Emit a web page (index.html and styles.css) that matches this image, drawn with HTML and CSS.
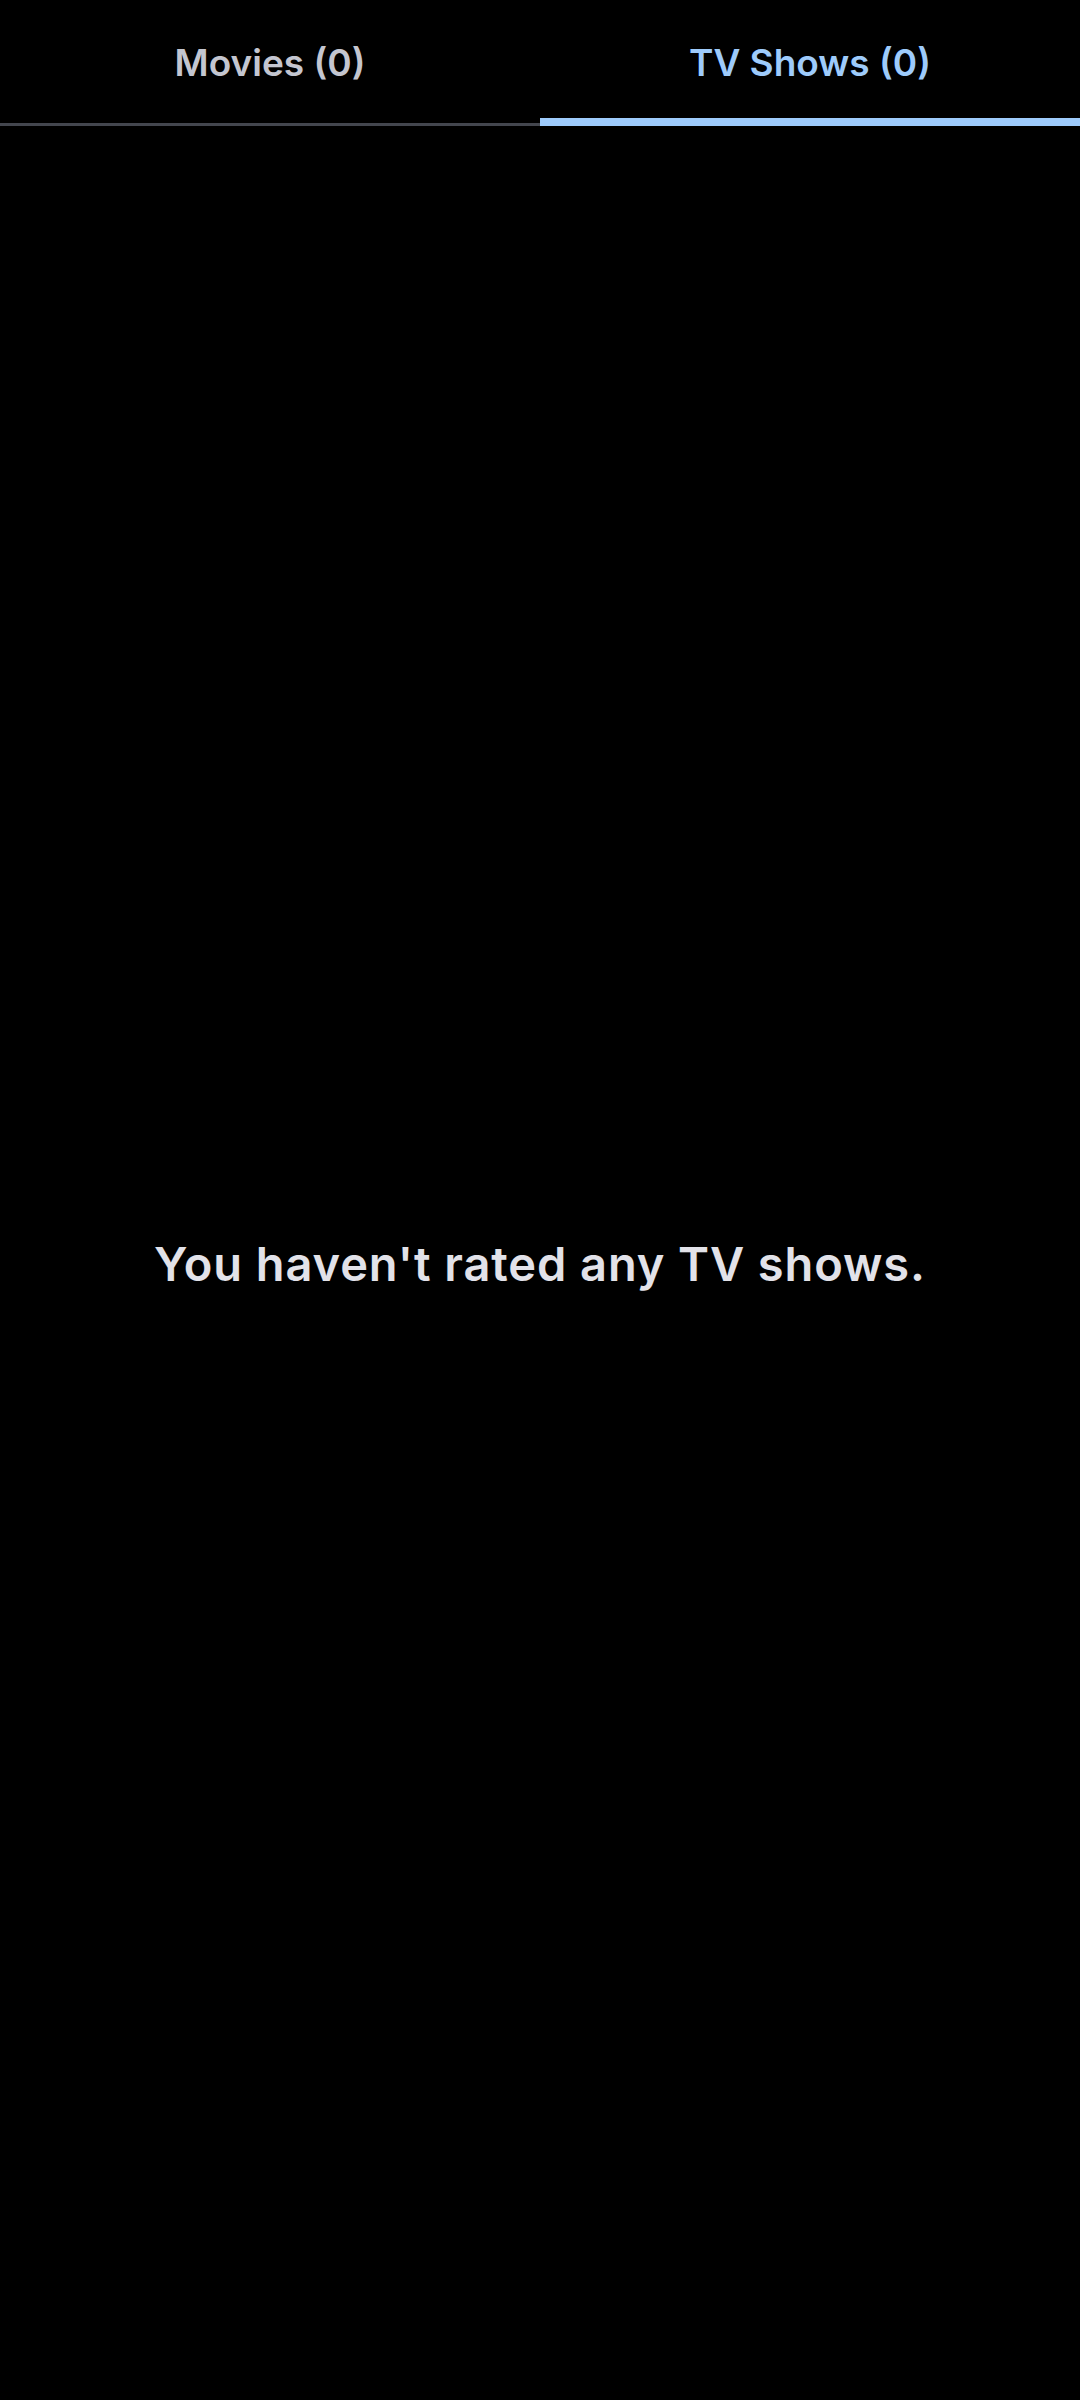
FILE: index.html
```html
<!DOCTYPE html>
<html lang="en">
<head>
<meta charset="utf-8">
<title>Ratings</title>
<link rel="stylesheet" href="styles.css">
</head>
<body>
<div class="app">
  <nav class="tabs">
    <div class="tab">
      <div class="tab-label">Movies (0)</div>
      <div class="tab-track"><div class="tab-line"></div></div>
    </div>
    <div class="tab tab-active">
      <div class="tab-label">TV Shows (0)</div>
      <div class="tab-track"><div class="tab-line"></div></div>
    </div>
  </nav>
  <main class="empty">
    <p class="empty-text">You haven't rated any TV shows.</p>
  </main>
</div>
</body>
</html>
```
FILE: styles.css
```css
html, body {
  margin: 0;
  padding: 0;
  background: #000;
}
.app {
  width: 1080px;
  height: 2400px;
  display: flex;
  flex-direction: column;
  font-family: Inter, "Noto Sans", sans-serif;
}
.tabs {
  display: flex;
  height: 126px;
}
.tab {
  flex: 1;
  display: flex;
  flex-direction: column;
}
.tab-label {
  height: 112px;
  padding-top: 6px;
  display: flex;
  align-items: center;
  justify-content: center;
  font-size: 37px;
  font-weight: 600;
  color: #c4c6d0;
}
.tab-track {
  height: 8px;
  display: flex;
  align-items: flex-end;
}
.tab-line {
  width: 100%;
  height: 3px;
  background: #43464e;
}
.tab-active .tab-label {
  color: #9ecbfb;
}
.tab-active .tab-line {
  height: 8px;
  background: #9ecbfb;
}
.empty {
  flex: 1;
  display: flex;
  align-items: center;
  justify-content: center;
}
.empty-text {
  margin: 0;
  font-size: 47px;
  font-weight: 600;
  letter-spacing: 0.9px;
  color: #e2e2e9;
}
```
